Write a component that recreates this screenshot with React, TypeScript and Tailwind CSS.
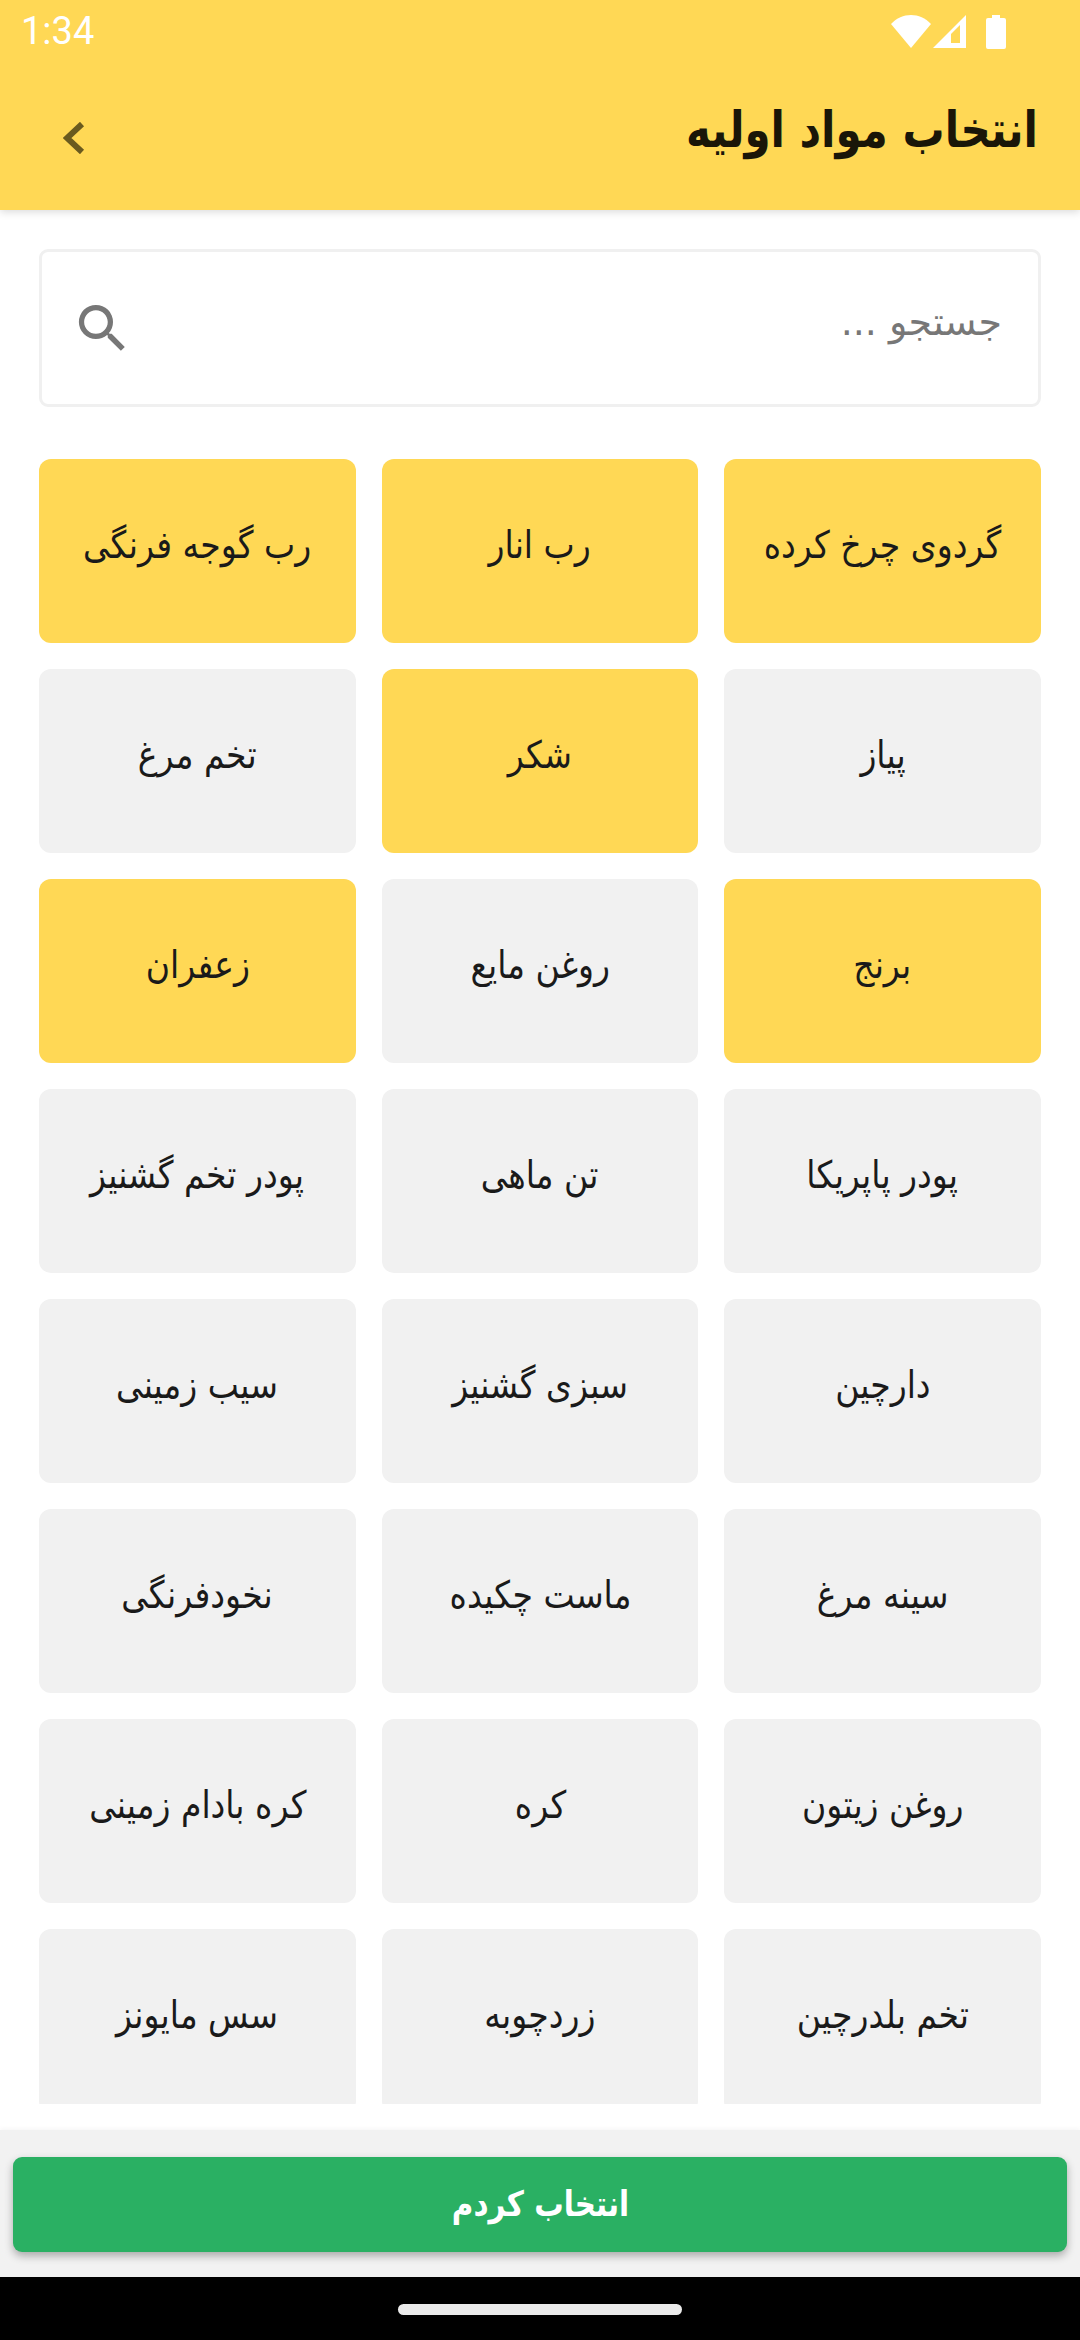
const items = [
  { name: "گردوی چرخ کرده", on: true },
  { name: "رب انار", on: true },
  { name: "رب گوجه فرنگی", on: true },
  { name: "پیاز", on: false },
  { name: "شکر", on: true },
  { name: "تخم مرغ", on: false },
  { name: "برنج", on: true },
  { name: "روغن مایع", on: false },
  { name: "زعفران", on: true },
  { name: "پودر پاپریکا", on: false },
  { name: "تن ماهی", on: false },
  { name: "پودر تخم گشنیز", on: false },
  { name: "دارچین", on: false },
  { name: "سبزی گشنیز", on: false },
  { name: "سیب زمینی", on: false },
  { name: "سینه مرغ", on: false },
  { name: "ماست چکیده", on: false },
  { name: "نخودفرنگی", on: false },
  { name: "روغن زیتون", on: false },
  { name: "کره", on: false },
  { name: "کره بادام زمینی", on: false },
  { name: "تخم بلدرچین", on: false },
  { name: "زردچوبه", on: false },
  { name: "سس مایونز", on: false },
];

export default function App() {
  return (
    <div className="w-[1080px] h-[2340px] flex flex-col bg-white overflow-hidden font-['DejaVu_Sans',sans-serif]">
      {/* Status bar + header */}
      <div className="h-[210px] shrink-0 bg-[#ffd855] shadow-[0_2px_8px_rgba(0,0,0,0.15)] z-10 flex flex-col">
        <div className="h-[63px] flex items-center justify-between pl-[21px] pr-[74px] text-white">
          <span className="text-[38px] font-['Roboto',sans-serif]">1:34</span>
          <div className="flex items-center">
            <svg width="40" height="33" viewBox="0 0 40 33"><path d="M20 33 0 9C11-3 29-3 40 9z" fill="#fff" /></svg>
            <svg className="ml-[2px]" width="34" height="34" viewBox="0 0 34 34"><path d="M33 0v33H0z" fill="#fff" /><path d="M18 19l9-9v18h-9z" fill="#ffd855" /></svg>
            <svg className="ml-[19px]" width="20" height="34" viewBox="0 0 20 34"><path d="M6 0h8v3h4a2 2 0 0 1 2 2v27a2 2 0 0 1-2 2H2a2 2 0 0 1-2-2V5a2 2 0 0 1 2-2h4z" fill="#fff" /></svg>
          </div>
        </div>
        <div className="flex-1 flex items-center justify-between pl-[63px] pr-[42px] pb-[12px]">
          <svg className="mt-[14px]" width="22" height="32" viewBox="0 0 22 32" fill="none" stroke="#6a5a1e" strokeWidth="6"><path d="M19 2 4 16l15 14" /></svg>
          <h1 dir="rtl" className="text-[50px] font-bold text-[#1a1608] origin-right scale-x-[0.84]">انتخاب مواد اولیه</h1>
        </div>
      </div>

      {/* Search */}
      <div className="px-[39px] pt-[39px] shrink-0">
        <div className="h-[158px] border-[3px] border-[#f0f0f0] rounded-[9px] flex items-center justify-between pl-[29px] pr-[36px]">
          <svg width="63" height="63" viewBox="0 0 24 24" fill="#777"><path d="M15.5 14h-.79l-.28-.27A6.47 6.47 0 0 0 16 9.5 6.5 6.5 0 1 0 9.5 16c1.61 0 3.09-.59 4.23-1.57l.27.28v.79l5 4.99L20.49 19l-4.99-5zm-6 0C7.01 14 5 11.99 5 9.5S7.01 5 9.5 5 14 7.01 14 9.5 11.99 14 9.5 14z" /></svg>
          <span dir="rtl" className="text-[38px] text-[#777] pb-[12px]">جستجو ...</span>
        </div>
      </div>

      {/* Ingredient grid */}
      <div className="h-[1645px] shrink-0 overflow-hidden mt-[52px] px-[39px]">
        <div dir="rtl" className="grid grid-cols-3 gap-[26px]">
          {items.map((item) => (
            <div
              key={item.name}
              className={`h-[184px] rounded-[12px] flex items-center justify-center pb-[12px] text-[38px] text-[#1a1a1a] ${item.on ? "bg-[#ffd855]" : "bg-[#f1f1f1]"}`}
            >
              <span className="inline-block scale-x-[0.87]">{item.name}</span>
            </div>
          ))}
        </div>
      </div>

      {/* Bottom action */}
      <div className="h-[147px] shrink-0 bg-[#f2f2f2] mt-[26px] px-[13px] pt-[27px] shadow-[0_-2px_4px_rgba(0,0,0,0.03)]">
        <div className="h-[95px] rounded-[9px] bg-[#2ab063] flex items-center justify-center text-white text-[35px] font-bold shadow-[0_4px_8px_rgba(0,0,0,0.3)]">
          <span dir="rtl" className="inline-block scale-x-[0.84]">انتخاب کردم</span>
        </div>
      </div>

      {/* Nav bar */}
      <div className="h-[63px] shrink-0 bg-black flex items-center justify-center pt-[2px]">
        <div className="w-[284px] h-[11px] rounded-full bg-[#ebebeb]" />
      </div>
    </div>
  );
}
